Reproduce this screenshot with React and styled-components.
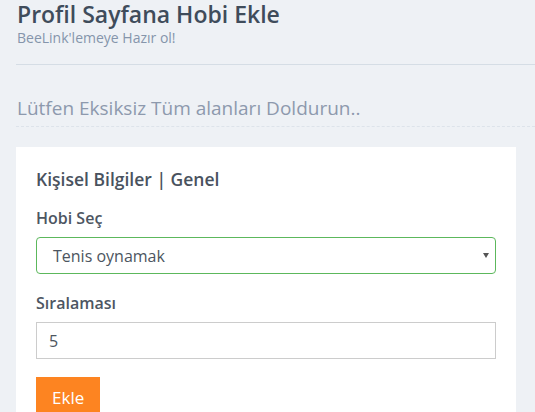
import React from 'react'
import styled, { createGlobalStyle } from 'styled-components'

const Global = createGlobalStyle`
  html, body {
    margin: 0;
    padding: 0;
    background: #eef1f5;
    font-family: 'Open Sans', 'Noto Sans', sans-serif;
  }
`

const Page = styled.div`
  padding: 0 0 0 16px;
`

const Header = styled.div`
  padding: 1px 0 0 1px;
  height: 65px;
  border-bottom: 1px solid #d5dde5;
  box-sizing: border-box;
`

const Title = styled.h1`
  margin: 0;
  font-size: 23px;
  font-weight: 600;
  line-height: 26px;
  color: #3f4c5b;
`

const Subtitle = styled.div`
  margin-top: 2px;
  font-size: 14px;
  line-height: 17px;
  color: #8595ab;
`

const Notice = styled.h3`
  margin: 0;
  padding: 30px 0 0 1px;
  height: 62px;
  box-sizing: border-box;
  font-size: 19px;
  font-weight: 400;
  line-height: 26px;
  color: #8d99ad;
  border-bottom: 1px dashed #dde3ea;
`

const Card = styled.div`
  margin-top: 20px;
  width: 500px;
  background: #fff;
  padding: 20px 20px 20px;
  box-sizing: border-box;
`

const CardTitle = styled.div`
  font-size: 17.5px;
  font-weight: 600;
  line-height: 24px;
  color: #49525e;
  margin-bottom: 16px;
`

const Label = styled.label`
  display: block;
  font-size: 16px;
  font-weight: 600;
  line-height: 22px;
  color: #4d5662;
  margin-bottom: 8px;
`

const Field = styled.div`
  margin-bottom: 18px;
`

const SelectBox = styled.div`
  position: relative;
  height: 37px;
  border: 1px solid ${({ ok }) => (ok ? '#5cb85c' : '#cccccc')};
  border-radius: ${({ ok }) => (ok ? '4px' : '0')};
  box-sizing: border-box;
  display: flex;
  align-items: center;
  padding: 0 ${({ ok }) => (ok ? '16px' : '12px')};
  font-size: 16px;
  color: #4c5560;
  background: #fff;
`

const Caret = styled.span`
  position: absolute;
  right: 6px;
  top: 15px;
  width: 0;
  height: 0;
  border-left: 3px solid transparent;
  border-right: 3px solid transparent;
  border-top: 5px solid #555;
`

const Button = styled.button`
  height: 40px;
  padding: 0 16px;
  border: none;
  background: #fd8421;
  color: #fff;
  font-family: inherit;
  font-size: 17px;
`

export default function App() {
  return (
    <Page>
      <Global />
      <Header>
        <Title>Profil Sayfana Hobi Ekle</Title>
        <Subtitle>BeeLink'lemeye Hazır ol!</Subtitle>
      </Header>
      <Notice>Lütfen Eksiksiz Tüm alanları Doldurun..</Notice>
      <Card>
        <CardTitle>Kişisel Bilgiler | Genel</CardTitle>
        <Field>
          <Label>Hobi Seç</Label>
          <SelectBox ok>
            Tenis oynamak
            <Caret />
          </SelectBox>
        </Field>
        <Field>
          <Label>Sıralaması</Label>
          <SelectBox>5</SelectBox>
        </Field>
        <Button>Ekle</Button>
      </Card>
    </Page>
  )
}
